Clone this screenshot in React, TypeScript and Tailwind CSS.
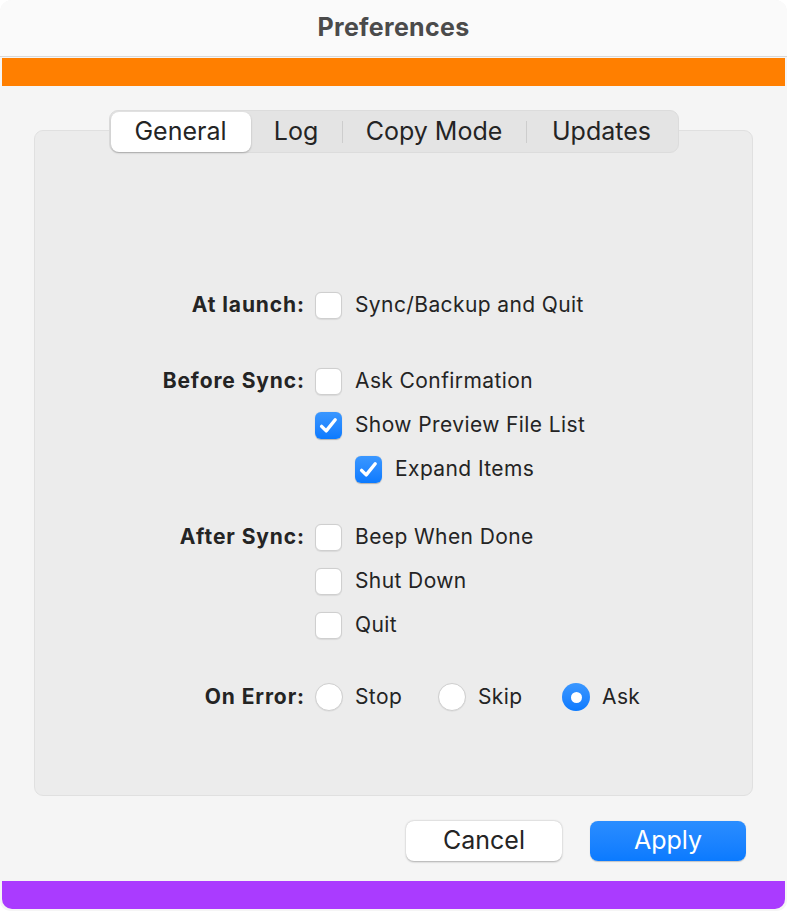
import React from 'react';

const font = { fontFamily: 'Inter, "Liberation Sans", sans-serif' };

function Check({ checked }: { checked?: boolean }) {
  if (checked) {
    return (
      <span className="flex h-[27px] w-[27px] shrink-0 items-center justify-center rounded-[6px] bg-gradient-to-b from-[#3a97ff] to-[#0a7aff] shadow-[0_0.5px_1px_rgba(0,0,0,0.25)]">
        <svg width="19" height="17" viewBox="0 0 19 17" fill="none">
          <path d="M2.6 9.4 L7.2 13.9 L16.2 2.8" stroke="white" strokeWidth="3.4" strokeLinecap="round" strokeLinejoin="round" />
        </svg>
      </span>
    );
  }
  return <span className="h-[27px] w-[27px] shrink-0 rounded-[6px] border border-[#cfcfcf] bg-white shadow-[0_0.5px_1px_rgba(0,0,0,0.08)]" />;
}

function Radio({ checked }: { checked?: boolean }) {
  if (checked) {
    return (
      <span className="flex h-[28px] w-[28px] shrink-0 items-center justify-center rounded-full bg-gradient-to-b from-[#3a97ff] to-[#0a7aff]">
        <span className="h-[11px] w-[11px] rounded-full bg-white" />
      </span>
    );
  }
  return <span className="h-[28px] w-[28px] shrink-0 rounded-full border border-[#cfcfcf] bg-white shadow-[0_0.5px_1px_rgba(0,0,0,0.08)]" />;
}

function Row({ label, children }: { label?: string; children: React.ReactNode }) {
  return (
    <div className="flex h-[44px] items-center">
      <div className="w-[280px] pr-[10px] text-right text-[21px] font-bold tracking-[0.9px] text-[#242424]">{label}</div>
      <div className="flex items-center">{children}</div>
    </div>
  );
}

function Option({ text, checked, indent }: { text: string; checked?: boolean; indent?: boolean }) {
  return (
    <div className={`flex items-center gap-[13px] ${indent ? 'pl-[40px]' : ''}`}>
      <Check checked={checked} />
      <span className="text-[21px] tracking-[0.4px] text-[#242424]">{text}</span>
    </div>
  );
}

const tabs = [
  { name: 'General', w: 'w-[140px]' },
  { name: 'Log', w: 'w-[91px]' },
  { name: 'Copy Mode', w: 'w-[183px]' },
  { name: 'Updates', w: 'w-[150px]' },
];

export default function App() {
  return (
    <div className="h-[912px] w-[788px] bg-white" style={font}>
      <div className="flex h-[911px] w-[787px] flex-col overflow-hidden rounded-t-[12px] rounded-b-[10px] bg-[#f5f5f5]">
        {/* Title bar */}
        <div className="flex h-[57px] shrink-0 items-center justify-center border-b border-[#d8d8d8] bg-[#fafafa]">
          <span className="text-[25px] font-bold tracking-[0.3px] text-[#4b4b4b]">Preferences</span>
        </div>
        <div className="px-[2px] pt-[1px]">
          <div className="h-[28px] bg-[#ff7f00]" />
        </div>

        {/* Tabs */}
        <div className="relative z-10 mt-[24px] flex justify-center">
          <div className="flex h-[43px] items-center rounded-[9px] border border-[#dcdcdc] bg-[#e4e4e4] p-[1px]">
            {tabs.map((t, i) => (
              <React.Fragment key={t.name}>
                {i > 1 && <span className="h-[22px] w-px bg-[#cdcdcd]" />}
                <div
                  className={
                    i === 0
                      ? `flex h-[40px] ${t.w} items-center justify-center rounded-[8px] bg-white text-[25px] text-[#242424] shadow-[0_1px_2px_rgba(0,0,0,0.25)]`
                      : `flex h-[40px] ${t.w} items-center justify-center text-[25px] text-[#242424]`
                  }
                >
                  {t.name}
                </div>
              </React.Fragment>
            ))}
          </div>
        </div>

        {/* Group box */}
        <div className="mx-[34px] -mt-[23px] h-[666px] rounded-[9px] border border-[#e0e0e0] bg-[#ececec] pt-[152px]">
          <Row label="At launch:">
            <Option text="Sync/Backup and Quit" />
          </Row>
          <div className="mt-[32px]">
            <Row label="Before Sync:">
              <Option text="Ask Confirmation" />
            </Row>
            <Row>
              <Option text="Show Preview File List" checked />
            </Row>
            <Row>
              <Option text="Expand Items" checked indent />
            </Row>
          </div>
          <div className="mt-[24px]">
            <Row label="After Sync:">
              <Option text="Beep When Done" />
            </Row>
            <Row>
              <Option text="Shut Down" />
            </Row>
            <Row>
              <Option text="Quit" />
            </Row>
          </div>
          <div className="mt-[28px]">
            <Row label="On Error:">
              <div className="flex w-[123px] items-center gap-[12px]">
                <Radio />
                <span className="text-[21px] tracking-[0.4px] text-[#242424]">Stop</span>
              </div>
              <div className="flex w-[124px] items-center gap-[12px]">
                <Radio />
                <span className="text-[21px] tracking-[0.4px] text-[#242424]">Skip</span>
              </div>
              <div className="flex items-center gap-[12px]">
                <Radio checked />
                <span className="text-[21px] tracking-[0.4px] text-[#242424]">Ask</span>
              </div>
            </Row>
          </div>
        </div>

        {/* Buttons */}
        <div className="mt-[25px] flex justify-end gap-[28px] pr-[41px]">
          <button className="h-[40px] w-[156px] rounded-[8px] bg-white text-[25px] text-[#242424] shadow-[0_0.5px_2px_rgba(0,0,0,0.3)]">
            Cancel
          </button>
          <button className="h-[40px] w-[156px] rounded-[8px] bg-gradient-to-b from-[#2a8dff] to-[#0a7aff] text-[25px] text-white shadow-[0_0.5px_1px_rgba(0,0,0,0.2)]">
            Apply
          </button>
        </div>

        <div className="mt-[20px] px-[2px]">
          <div className="h-[28px] rounded-b-[10px] bg-[#aa3bff]" />
        </div>
      </div>
    </div>
  );
}
